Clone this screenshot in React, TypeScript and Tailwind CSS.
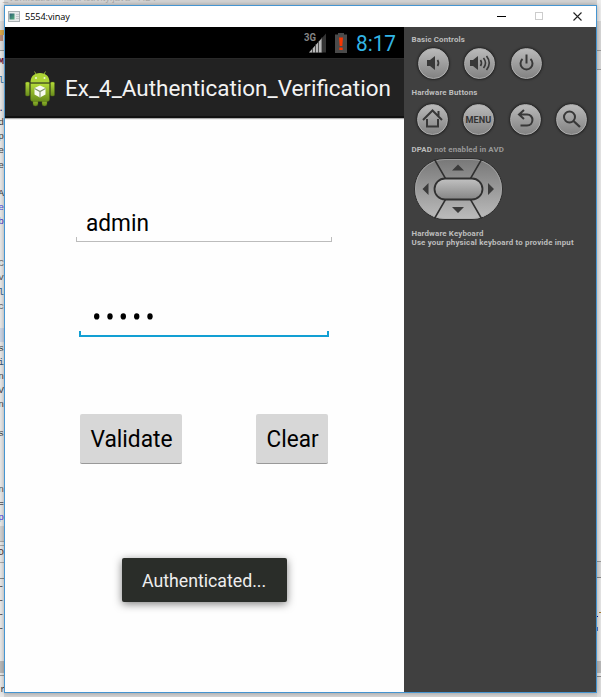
import type { ReactNode } from "react";

const editorRows: [string, string][] = [
  ["l", "text-[#2f6f9f]"], ["", ""], [".", "text-[#222266]"], ["d", "text-[#444]"], ["p", "text-[#444]"],
  ["e", "text-[#444]"], ["e", "text-[#444]"], ["", ""], ["A", "text-[#333]"], ["e", "text-[#4b4be0]"],
  ["b", "text-[#4b3bc8]"], ["", ""], ["", ""], ["C", "text-[#777]"], ["v", "text-[#555]"],
  ["l", "text-[#2f5f8f]"], ["c", "text-[#666]"], ["", ""], ["", ""], ["s", "text-[#444]"],
  ["i", "text-[#335577]"], ["n", "text-[#444]"], ["V", "text-[#444]"], ["n", "text-[#444]"], ["", ""],
  ["s", "text-[#444]"], ["", ""], ["", ""], ["", ""], ["n", "text-[#555]"], ["=", "text-black"], ["p", "text-[#4b3be0]"],
];

function LeftEdge() {
  return (
    <div className="flex h-full w-1 flex-col overflow-hidden bg-[#e9e9e9] font-['Liberation_Mono',monospace] text-[9.500px]">
      <div className="h-[21px] shrink-0 bg-[#eeeeee]" />
      <div className="flex h-[30px] shrink-0 flex-col justify-center border-b border-[#999] bg-[#dedede]">
        <div className="h-[5px] bg-[#dba94c]" />
        <div className="h-[6px] w-[3px] bg-[#bd8d78]" />
      </div>
      <div className="flex h-[23px] shrink-0 items-center justify-end font-bold text-[#661133]">M</div>
      {editorRows.map(([char, color], i) => (
        <div key={i} className={`flex h-[14.12px] shrink-0 items-center justify-end ${color} ${i === 18 ? "bg-[#ccd6e6]" : ""}`}>
          {char}
        </div>
      ))}
      <div className="h-[16px] shrink-0 border-b border-[#aaa] bg-[#d2d2d2]" />
      <div className="h-1 shrink-0 border-b border-[#aaa]" />
      <div className="flex h-[17px] shrink-0 items-center justify-end border-b border-[#aaa] text-[#553333]">D</div>
      <div className="h-[16px] shrink-0 border-b border-[#888]" />
      {[0, 1, 2, 3].map((i) => (
        <div key={i} className="flex h-[14.1px] shrink-0 items-center justify-end pt-[3px] text-[#333]">-</div>
      ))}
      <div className="h-[26px] shrink-0" />
      <div className="h-[12px] shrink-0 bg-[#b9b9b9]" />
      <div className="h-[3px] shrink-0 border-b border-[#999]" />
      <div className="flex grow items-end text-[#444]">r</div>
    </div>
  );
}

function RightEdge() {
  return (
    <div className="flex h-full w-1 flex-col bg-[#e6e6e6]">
      <div className="h-[21px] shrink-0 bg-[#ededed]" />
      <div className="h-[30px] shrink-0 border-b border-[#999] bg-[#d7d7d7]" />
      <div className="h-[19px] shrink-0 border-b border-[#999] bg-[#d7d7d7]" />
      <div className="h-[492px] shrink-0 border-b border-[#999]" />
      <div className="h-[16px] shrink-0 border-b border-[#888] bg-[#d9d9d9]" />
      <div className="h-[34px] shrink-0" />
      <div className="ml-0.5 h-px shrink-0 bg-[#a57a32]" />
      <div className="h-[3px] shrink-0" />
      <div className="h-px w-px shrink-0 bg-[#0b1b90]" />
      <div className="h-[10px] shrink-0" />
      <div className="h-1 w-px shrink-0 bg-[#4d73c5]" />
      <div className="h-[30px] shrink-0" />
      <div className="h-[12px] shrink-0 bg-[#b9b9b9]" />
      <div className="h-1 shrink-0 border-b border-[#888]" />
      <div className="grow bg-[#dddddd]" />
    </div>
  );
}

function TitleBar() {
  return (
    <div className="flex h-[21px] shrink-0 items-center bg-white">
      <svg className="ml-[3px]" width="12" height="11" viewBox="0 0 12 11">
        <defs>
          <linearGradient id="win" x1="0" y1="0" x2="1" y2="1">
            <stop offset="0" stopColor="#2c5c74" /><stop offset="1" stopColor="#55b07c" />
          </linearGradient>
        </defs>
        <rect x=".5" y=".5" width="11" height="10" fill="#e6e9ea" stroke="#aab2b5" />
        <rect x="1.5" y="2.5" width="5" height="6" fill="url(#win)" />
        <path d="M8 3.5h3M8 5.5h3M8 7.5h3" stroke="#c4c8ca" />
      </svg>
      <span className="ml-[5px] grow font-['Open_Sans','Liberation_Sans',sans-serif] text-[9.2px] leading-none tracking-[-0.1px] text-black">5554:vinay</span>
      <svg className="mr-[3px]" width="100" height="21" viewBox="0 0 100 21" fill="none">
        <path d="M4 10.5h9" stroke="#000" />
        <rect x="42.5" y="6.5" width="7" height="7" stroke="#ccc" />
        <path d="M80.5 6.5l8 8M88.5 6.5l-8 8" stroke="#222" strokeWidth="1.1" />
      </svg>
    </div>
  );
}

function AndroidLogo() {
  return (
    <svg width="32" height="38" viewBox="0 0 32 38" className="mt-[2px] shrink-0">
      <defs>
        <linearGradient id="droid" x1="0" y1="0" x2="0" y2="1">
          <stop offset="0" stopColor="#b5dc39" /><stop offset=".5" stopColor="#8eb32b" /><stop offset="1" stopColor="#678b1b" />
        </linearGradient>
      </defs>
      <path d="M10.5 1.500l2 3.5M21.5 1.500l-2 3.5" stroke="#8eaa35" strokeWidth="1" />
      <path d="M6.5 12.500C6.5 6.500 10 3 16 3s9.500 3.500 9.500 9.500z" fill="#add436" />
      <circle cx="12" cy="8" r="1" fill="#eef6d6" /><circle cx="20.500" cy="8" r="1" fill="#eef6d6" />
      <g fill="url(#droid)" stroke="#536d17" strokeWidth=".4">
        <rect x="1.500" y="12" width="4" height="14" rx="1.300" />
        <rect x="26.500" y="12" width="4" height="14" rx="1.300" />
        <rect x="9" y="27" width="5" height="9" rx="2.300" />
        <rect x="18" y="27" width="5" height="9" rx="2.300" />
        <path d="M6.500 13.500h19v15.500q0 2.500-2.500 2.500h-14q-2.500 0-2.500-2.500z" />
      </g>
      <path d="M16 15.500l5.500 2.500v6.500L16 27.500l-5.500-3V18z" fill="#f8faf2" />
      <path d="M10.500 18.500l5.500 3 5.500-3M16 21.500v6" fill="none" stroke="#81956a" strokeWidth="1.100" />
    </svg>
  );
}

function StatusBar() {
  return (
    <div className="flex h-[31px] shrink-0 items-center justify-end bg-black">
      <svg width="46" height="22" viewBox="0 0 46 22">
        <path d="M5 20.500L22 1.500v19z" fill="#353535" />
        <path d="M5 20.500L18 6v14.500z" fill="#b7b7b7" />
        <path d="M8.500 16v5M11.500 12v9M14.500 9v12M18 5v16" stroke="#333" strokeWidth=".8" />
        <text x="0" y="9" fontSize="10" fontWeight="700" textLength="12" lengthAdjust="spacingAndGlyphs" fill="#858585" fontFamily="Roboto, sans-serif">3G</text>
        <path d="M31 2.500h3V1h6v1.500h3v18.500H31z" fill="#4a4a4a" />
        <path d="M35 5.500h4l-.7 8.500h-2.600zM35.300 15.500h3.400V18h-3.400z" fill="#fa3500" />
      </svg>
      <span className="mt-[2px] mr-[8px] ml-[6px] w-[40px] origin-left scale-x-[.965] whitespace-nowrap text-[21.5px] leading-none text-[#33b5e5]">8:17</span>
    </div>
  );
}

function Phone() {
  return (
    <div className="flex w-[399px] shrink-0 flex-col bg-[#fefefe] font-[Roboto,sans-serif]">
      <StatusBar />
      <div className="flex h-[60px] shrink-0 items-center border-t border-b-2 border-t-[#292929] border-b-[#111] bg-[#222] pl-[19px] shadow-[0_1px_1px_#aaa]">
        <AndroidLogo />
        <h1 className="mt-[2px] ml-[9px] w-[326px] origin-left scale-x-[.998] whitespace-nowrap text-[22.500px] leading-none text-[#f3f3f3]">Ex_4_Authentication_Verification</h1>
      </div>
      <div className="ml-[71px] mt-[86px] flex h-[38px] w-[256px] shrink-0 flex-col text-black">
        <span className="ml-[9.500px] mt-[8px] w-max origin-left scale-x-[.985] whitespace-nowrap text-[23px] leading-none">admin</span>
        <div className="mt-auto h-[5px] border border-t-0 border-[#bcbcbc]" />
      </div>
      <div className="ml-[74px] mt-[60px] flex h-[35px] w-[250px] shrink-0 flex-col">
        <svg className="mt-[11px] ml-[14px]" width="62" height="7" viewBox="0 0 62 7">
          {[3.7, 17, 30.3, 43.7, 57].map((cx) => <ellipse key={cx} cx={cx} cy="3.400" rx="2.700" ry="3.100" />)}
        </svg>
        <div className="mt-auto h-[6px] border-2 border-t-0 border-[#129fd3]" />
      </div>
      <div className="ml-[75px] mt-[77px] flex w-[248px] shrink-0 justify-between">
        <button className="flex h-[50px] w-[102px] items-center justify-center rounded-[2px] border-b-[1.500px] border-[#999] bg-[#d7d7d7] text-[23px] leading-none text-black">
          <span className="mt-px ml-px scale-x-[.99]">Validate</span>
        </button>
        <button className="flex h-[50px] w-[72px] items-center justify-center rounded-[2px] border-b-[1.500px] border-[#999] bg-[#d7d7d7] text-[23px] leading-none text-black">
          <span className="mt-px ml-px scale-x-[.98]">Clear</span>
        </button>
      </div>
      <div className="ml-[117px] mt-[94px] flex h-[44px] w-[164.500px] shrink-0 items-center justify-center rounded-[2px] bg-[#2a2d29] text-[18px] leading-none text-[#eee] shadow-[0_2px_8px_rgba(0,0,0,.5)]">
        <span className="mt-px scale-x-[.985] whitespace-nowrap">Authenticated...</span>
      </div>
    </div>
  );
}

function RoundButton({ children }: { children: ReactNode }) {
  return (
    <div className="flex size-[31px] shrink-0 items-center justify-center rounded-full border border-[#adadad] bg-linear-to-b from-[#bababa] to-[#838383] shadow-[0_0_2px_1px_#252525]">
      <svg width="29" height="29" viewBox="0 0 29 29" fill="none" stroke="#383838" strokeWidth="2">
        {children}
      </svg>
    </div>
  );
}

function Controls() {
  return (
    <aside className="flex grow flex-col bg-[#404040] pl-[7.500px] font-[Roboto,sans-serif] text-[7.900px] leading-[9px] font-bold tracking-[.14px] whitespace-nowrap text-[#bdbdbd]">
      <div className="mt-[8px]">Basic Controls</div>
      <div className="mt-[4px] ml-[6px] flex gap-[15.500px]">
        <RoundButton>
          <path d="M8 11h3l5-4v14l-5-4H8z" fill="#383838" stroke="none" />
          <path d="M18.500 11q2 3 0 6" strokeWidth="1.700" />
        </RoundButton>
        <RoundButton>
          <path d="M5 11h3l5-4v14l-5-4H5z" fill="#383838" stroke="none" />
          <path d="M15.500 11q2 3 0 6M18.500 9q4 5 0 10M21.500 7q5.500 7 0 14" strokeWidth="1.600" />
        </RoundButton>
        <RoundButton><path d="M10.500 10a6 6 0 1 0 8 0M14.500 5.500v9" /></RoundButton>
      </div>
      <div className="mt-[9px]">Hardware Buttons</div>
      <div className="mt-[7px] ml-[5px] flex gap-[15.500px]">
        <RoundButton><path d="M5 15l9.500-9.500 9.500 9.500M20.500 6v5.500M9 14v7.500h11V14" strokeWidth="2" /></RoundButton>
        <RoundButton><text x="14.500" y="18" textAnchor="middle" stroke="none" fill="#333" fontSize="9" fontWeight="700" textLength="26" lengthAdjust="spacingAndGlyphs" fontFamily="Roboto, sans-serif">MENU</text></RoundButton>
        <RoundButton><path d="M13 5l-5 4.500 5 4.500M8.500 9.500h7.500c7.500 0 7 11 0 11H9.500" /></RoundButton>
        <RoundButton><circle cx="12.500" cy="12" r="5.500" /><path d="M16.500 16l6.500 6" strokeWidth="2.300" /></RoundButton>
      </div>
      <div className="mt-[10px]">DPAD <span className="text-[#999]">not enabled in AVD</span></div>
      <svg className="mt-[3px] ml-[1.500px]" width="91" height="64" viewBox="0 0 91 64">
        <defs>
          <linearGradient id="pad" x1="0" y1="0" x2="0" y2="1"><stop stopColor="#777" /><stop offset="1" stopColor="#bcbcbc" /></linearGradient>
          <linearGradient id="key" x1="0" y1="0" x2="0" y2="1"><stop stopColor="#c2c2c2" /><stop offset="1" stopColor="#858585" /></linearGradient>
        </defs>
        <rect x="1.500" y="1.500" width="88" height="61" rx="30.500" fill="url(#pad)" stroke="#2d2d2d" />
        <rect x="2.500" y="2.500" width="86" height="59" rx="29.500" fill="none" stroke="#aaa" strokeWidth=".7" />
        <path d="M21.500 2.500l11 19M68.500 2.500l-11 19M21.500 61.500l11-19M68.500 61.500l-11-19" stroke="#303030" strokeWidth="1.500" />
        <rect x="21.500" y="21.500" width="48" height="21" rx="10.500" fill="url(#key)" stroke="#303030" strokeWidth="1.800" />
        <path d="M39 13.500h12l-6-6zM39 50h12l-6 6zM15.500 26v12l-6-6zM75 26v12l6-6z" fill="#3b3b3b" />
      </svg>
      <div className="mt-[8px]">Hardware Keyboard</div>
      <div className="tracking-[.18px]">Use your physical keyboard to provide input</div>
    </aside>
  );
}

export default function App() {
  return (
    <main className="relative flex h-[697px] w-[601px] justify-between overflow-hidden bg-[#d4d4d4]">
      <LeftEdge />
      <RightEdge />
      <div className="absolute top-[-7px] left-[3px] font-['Liberation_Sans',sans-serif] text-[9px] leading-[10px] tracking-[.3px] whitespace-nowrap text-[#aaa]">_Verification/MainActivity.java - ADT</div>
      <section className="absolute top-[5px] left-1 flex h-[688px] w-[593px] flex-col border border-[#4595d1] shadow-[0_0_5px_rgba(0,0,0,.3)]">
        <TitleBar />
        <div className="flex min-h-0 grow">
          <Phone />
          <Controls />
        </div>
      </section>
    </main>
  );
}
